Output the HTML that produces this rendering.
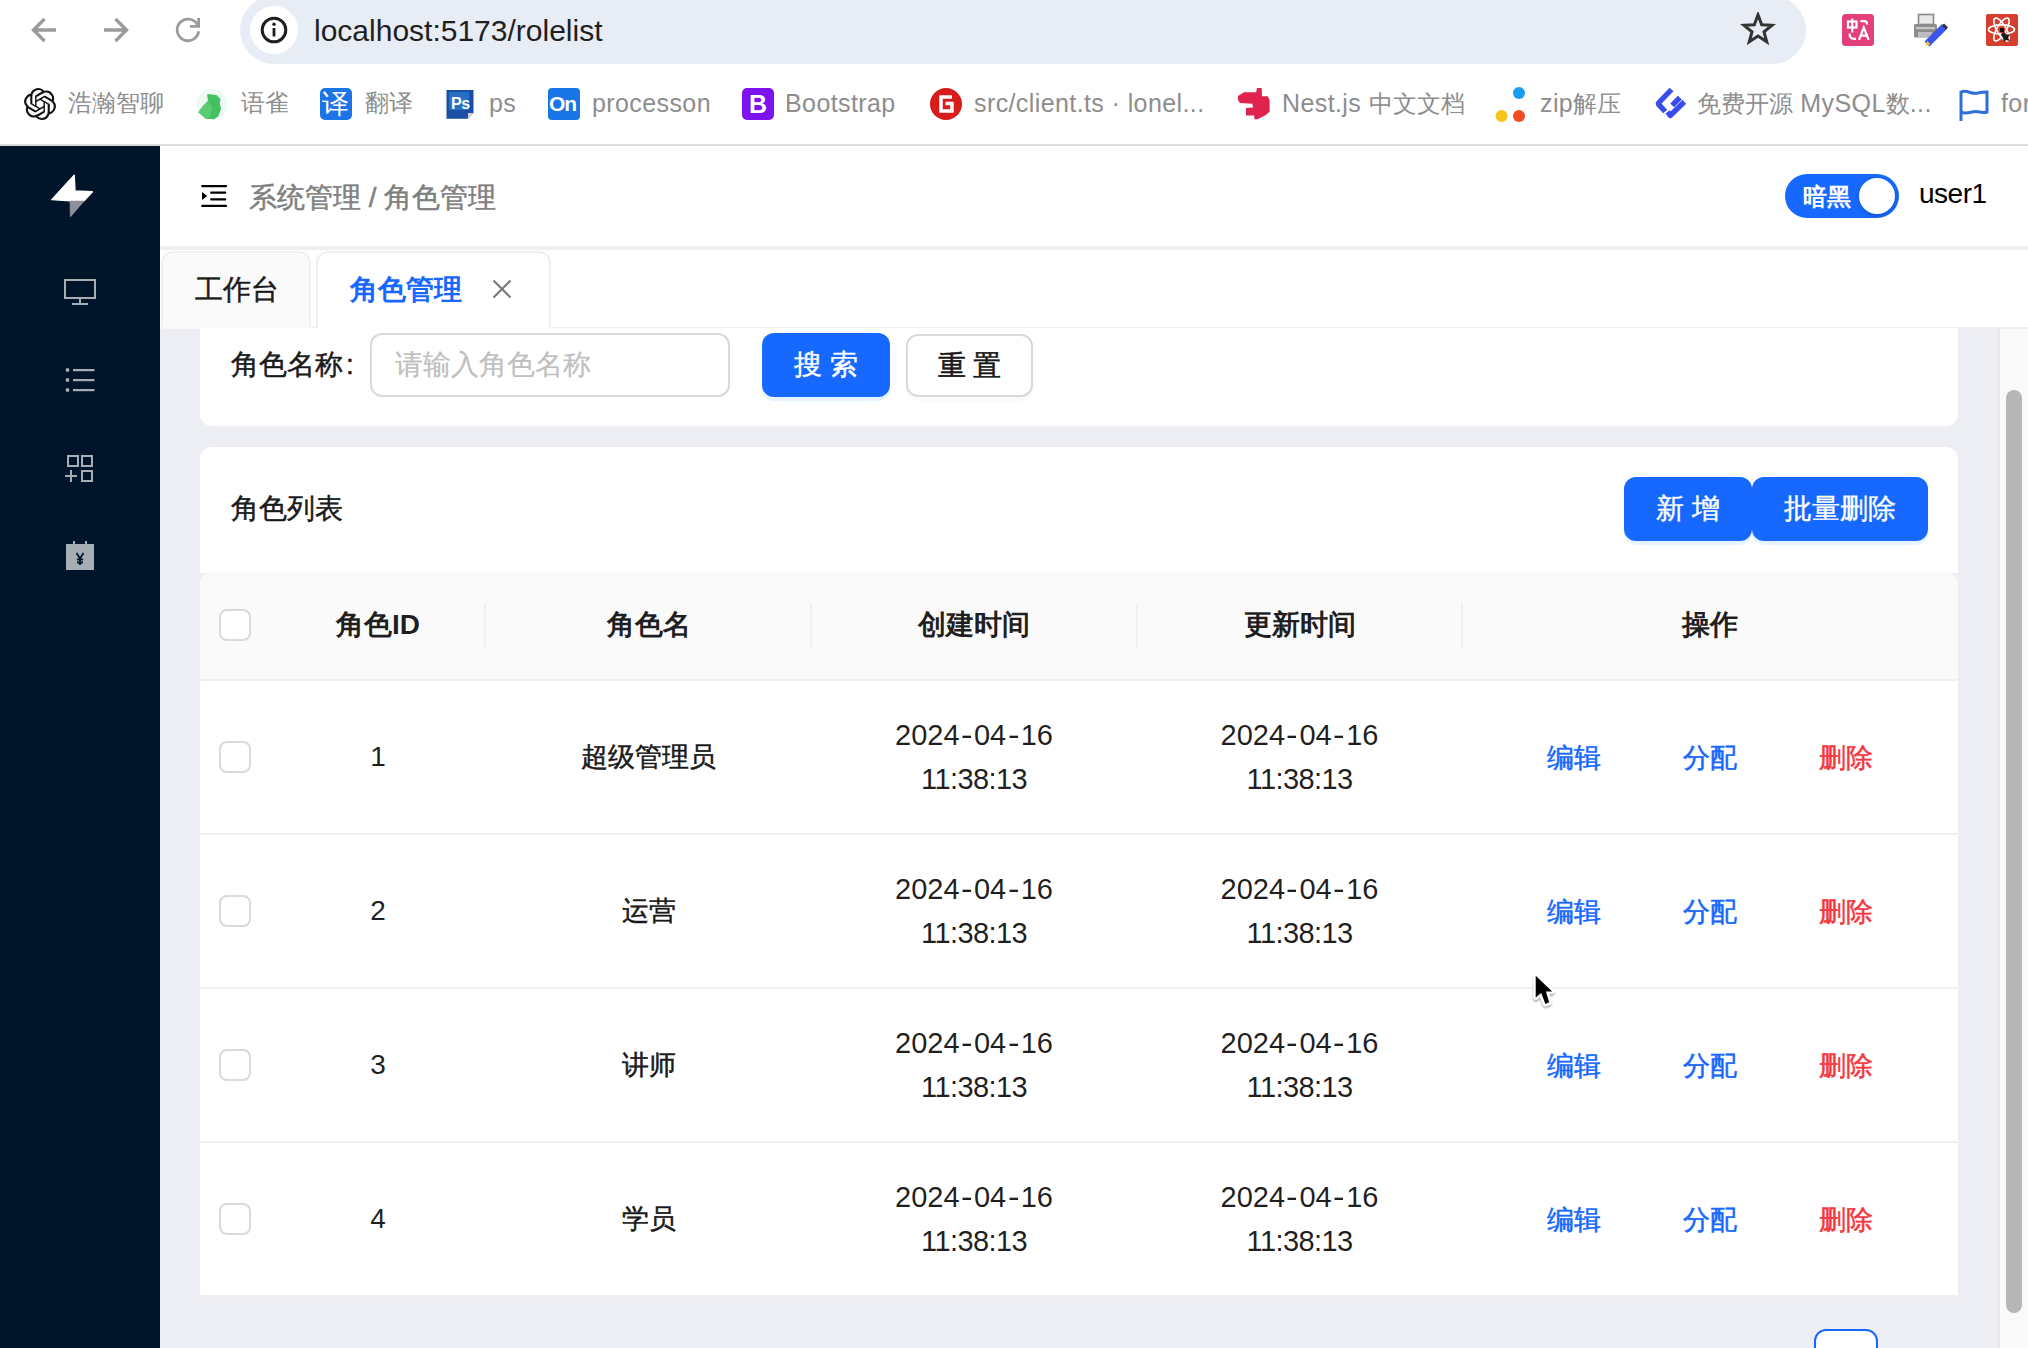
<!DOCTYPE html>
<html><head><meta charset="utf-8">
<style>
*{margin:0;padding:0;box-sizing:border-box}
html,body{width:2028px;height:1348px;overflow:hidden;background:#fff;font-family:"Liberation Sans",sans-serif;color:rgba(0,0,0,0.88)}
.a{position:absolute}
.t{position:absolute;white-space:nowrap;line-height:1}
/* chrome */
#pill{left:240px;top:-4px;width:1566px;height:68px;border-radius:34px;background:#e8ecf4}
#info{left:250px;top:6px;width:48px;height:48px;border-radius:24px;background:#fff}
#url{left:314px;top:16px;font-size:30px;color:#1f1f1f}
.bm{position:absolute;top:85px;height:36px;font-size:25px;letter-spacing:0.4px;color:#8d8d8d;white-space:nowrap;line-height:36px}
.bm .c,.bm.c{font-size:23.5px;letter-spacing:0}
#topline{left:0;top:144px;width:2028px;height:2px;background:#dcdcdc}
/* sider */
#sider{left:0;top:146px;width:160px;height:1202px;background:#001529}
/* header */
#hdr{left:160px;top:146px;width:1868px;height:100px;background:#fff}
#hband{left:160px;top:246px;width:1868px;height:4px;background:#efefef}
#tabs{left:160px;top:250px;width:1868px;height:78px;background:#fff}
#content{left:160px;top:328px;width:1838px;height:1020px;background:#eceef3}
#sb{left:1998px;top:328px;width:30px;height:1020px;background:#f9f9f9;border-left:2px solid #e6e6e6}
#thumb{left:2006px;top:390px;width:16px;height:923px;border-radius:8px;background:#b6b6b6}
.card{position:absolute;background:#fff}
.btnp{position:absolute;background:#1668ff;color:#fff;border-radius:12px;font-size:28px;text-align:center;box-shadow:0 4px 0 rgba(5,145,255,0.1)}
.chk{position:absolute;width:32px;height:32px;border:2px solid #d9d9d9;border-radius:8px;background:#fff}
.th{position:absolute;font-size:28px;font-weight:bold;text-align:center;line-height:1}
.td{position:absolute;font-size:28px;text-align:center;line-height:44px}
.act{position:absolute;font-size:27px;line-height:1;white-space:nowrap}
.dt{font-size:29px}.hy{display:inline-block;margin:0 2.4px;transform:scaleX(1.2)}.d2{letter-spacing:-0.6px}
.cj{-webkit-text-stroke:0.5px currentColor}
.td.cj{font-size:27px}
.row{position:absolute;left:200px;width:1758px;background:#fff;border-bottom:2px solid #f0f0f0}
</style></head><body>
<!-- browser chrome -->
<div class="a" id="pill"></div>
<div class="a" id="info"></div>
<div class="t" id="url">localhost:5173/rolelist</div>
<div class="a" id="topline"></div>
<!-- nav icons -->
<svg class="a" style="left:28px;top:14px" width="32" height="32" viewBox="0 0 32 32"><path d="M28 16H6M16.5 5L5.5 16L16.5 27" fill="none" stroke="#9b9b9b" stroke-width="3.4" stroke-linejoin="miter"/></svg>
<svg class="a" style="left:100px;top:14px" width="32" height="32" viewBox="0 0 32 32"><path d="M4 16H26M15.5 5L26.5 16L15.5 27" fill="none" stroke="#9b9b9b" stroke-width="3.4"/></svg>
<svg class="a" style="left:172px;top:14px" width="32" height="32" viewBox="0 0 32 32"><path d="M26.7 17.3A10.8 10.8 0 1 1 25.4 10.6" fill="none" stroke="#9b9b9b" stroke-width="2.8"/><path d="M25.2 4H28V13.8H18V11H25.2Z" fill="#9b9b9b"/></svg>
<svg class="a" style="left:258px;top:14px" width="32" height="32" viewBox="0 0 32 32"><circle cx="16" cy="16" r="11.8" fill="none" stroke="#1f1f1f" stroke-width="3"/><rect x="14.6" y="14" width="2.8" height="8.5" fill="#1f1f1f"/><circle cx="16" cy="10.2" r="1.7" fill="#1f1f1f"/></svg>
<svg class="a" style="left:1740px;top:12px" width="36" height="36" viewBox="0 0 36 36"><path d="M18.00 2.90L21.70 12.70L32.17 13.20L23.99 19.75L26.76 29.85L18.00 24.10L9.24 29.85L12.01 19.75L3.83 13.20L14.30 12.70Z" fill="none" stroke="#333" stroke-width="3" stroke-linejoin="miter"/></svg>
<svg class="a" style="left:1840px;top:12px" width="36" height="36" viewBox="1840 12 36 36"><rect x="1842" y="14" width="32" height="32" rx="3.5" fill="#e33f7c"/><g fill="none" stroke="#fff" stroke-width="2.2"><rect x="1848" y="21.5" width="8.5" height="6"/><path d="M1852.3 18.5V32.5"/><path d="M1860.5 21.2H1864.5Q1867 21.2 1867 24.5"/><path d="M1849.5 33.5Q1849.5 38.8 1854 38.8H1856"/><path d="M1859 39.8L1863.8 27.6L1868.6 39.8M1860.6 35.6H1867"/></g></svg>


<svg class="a" style="left:1910px;top:10px" width="40" height="40" viewBox="1910 10 40 40"><rect x="1918.5" y="14.5" width="15" height="10" fill="#e9e9e9" stroke="#8a8a8a" stroke-width="1.6"/><rect x="1914" y="24" width="23" height="13.5" rx="1.5" fill="#8c8c8c"/><rect x="1916" y="27" width="19" height="2.2" fill="#c9c9c9"/><rect x="1918" y="32" width="14" height="5" fill="#bdbdbd"/><path d="M1927 44L1944.5 26.5" stroke="#3a55ea" stroke-width="7"/><path d="M1943 24.5L1947 28.5" stroke="#333" stroke-width="3"/><path d="M1925.5 45.8L1927.2 40.8L1930.5 44.2Z" fill="#f2c020"/></svg>
<div class="a" style="left:1986px;top:14px;width:32px;height:32px;border-radius:2px;background:#d63f2e"></div>
<svg class="a" style="left:1986px;top:14px" width="32" height="32" viewBox="0 0 32 32"><g fill="none" stroke="#fff" stroke-width="1.6"><ellipse cx="15.5" cy="15.5" rx="13" ry="4.6"/><ellipse cx="15.5" cy="15.5" rx="13" ry="4.6" transform="rotate(60 15.5 15.5)"/><ellipse cx="15.5" cy="15.5" rx="13" ry="4.6" transform="rotate(120 15.5 15.5)"/></g><rect x="14" y="14" width="4" height="4" fill="#111"/><path d="M15 20L18 18L21 21L24 20L22 24L24 27L20 26L18 28L17 24Z" fill="#1a1a1a"/></svg>

<!-- bookmarks -->
<svg class="a" style="left:24px;top:88px" width="32" height="32" viewBox="0 0 24 24"><path fill="#111" d="M22.2819 9.8211a5.9847 5.9847 0 0 0-.5157-4.9108 6.0462 6.0462 0 0 0-6.5098-2.9A6.0651 6.0651 0 0 0 4.9807 4.1818a5.9847 5.9847 0 0 0-3.9977 2.9 6.0462 6.0462 0 0 0 .7427 7.0966 5.98 5.98 0 0 0 .511 4.9107 6.051 6.051 0 0 0 6.5146 2.9001A5.9847 5.9847 0 0 0 13.2599 24a6.0557 6.0557 0 0 0 5.7718-4.2058 5.9894 5.9894 0 0 0 3.9977-2.9001 6.0557 6.0557 0 0 0-.7475-7.0729zm-9.022 12.6081a4.4755 4.4755 0 0 1-2.8764-1.0408l.1419-.0804 4.7783-2.7582a.7948.7948 0 0 0 .3927-.6813v-6.7369l2.02 1.1686a.071.071 0 0 1 .038.052v5.5826a4.504 4.504 0 0 1-4.4945 4.4944zm-9.6607-4.1254a4.4708 4.4708 0 0 1-.5346-3.0137l.142.0852 4.783 2.7582a.7712.7712 0 0 0 .7806 0l5.8428-3.3685v2.3324a.0804.0804 0 0 1-.0332.0615L9.74 19.9502a4.4992 4.4992 0 0 1-6.1408-1.6464zM2.3408 7.8956a4.485 4.485 0 0 1 2.3655-1.9728V11.6a.7664.7664 0 0 0 .3879.6765l5.8144 3.3543-2.0201 1.1685a.0757.0757 0 0 1-.071 0l-4.8303-2.7865A4.504 4.504 0 0 1 2.3408 7.872zm16.5963 3.8558L13.1038 8.364 15.1192 7.2a.0757.0757 0 0 1 .071 0l4.8303 2.7913a4.4944 4.4944 0 0 1-.6765 8.1042v-5.6772a.79.79 0 0 0-.407-.667zm2.0107-3.0231l-.142-.0852-4.7735-2.7818a.7759.7759 0 0 0-.7854 0L9.409 9.2297V6.8974a.0662.0662 0 0 1 .0284-.0615l4.8303-2.7866a4.4992 4.4992 0 0 1 6.6802 4.66zM8.3065 12.863l-2.02-1.1638a.0804.0804 0 0 1-.038-.0567V6.0742a4.4992 4.4992 0 0 1 7.3757-3.4537l-.142.0805L8.704 5.459a.7948.7948 0 0 0-.3927.6813zm1.0976-2.3654l2.602-1.4998 2.6069 1.4998v2.9994l-2.5974 1.4997-2.6067-1.4997Z"/></svg>
<div class="bm c" style="left:68px">浩瀚智聊</div>
<svg class="a" style="left:194px;top:86px" width="36" height="36" viewBox="194 86 36 36"><circle cx="212.3" cy="104.3" r="15.5" fill="#eef9f1"/><path d="M207.2 94.1L216.5 95L220.6 99.2L219.7 102.4L221 109L218.5 116L214.2 119.3L206 118.7L198.3 112.3L203 106L207.9 101.1Z" fill="#42c062"/><path d="M198.3 112.3L203 106L207.9 101.1L212 108L210 117L206 118.7Z" fill="#5ccc72"/></svg>
<div class="bm c" style="left:241px">语雀</div>
<div class="a" style="left:320px;top:88px;width:32px;height:32px;border-radius:5px;background:#1d73e8"></div>
<div class="t" style="left:322px;top:91px;font-size:27px;color:#fff">译</div>
<div class="bm c" style="left:365px">翻译</div>
<svg class="a" style="left:444px;top:88px" width="34" height="34" viewBox="444 88 34 34"><path d="M446.5 90H473.5V113L468 118.7H446.5Z" fill="#1b4ea6"/><rect x="449" y="92" width="20" height="18" fill="#2a7fd2" opacity="0.7"/><path d="M468 118.7L473.5 113H468Z" fill="#d0d0d0"/></svg>
<div class="t" style="left:451px;top:96px;font-size:16px;color:#fff;font-weight:bold;letter-spacing:-0.5px">Ps</div>
<div class="bm" style="left:489px">ps</div>
<div class="a" style="left:548px;top:88px;width:32px;height:32px;border-radius:4px;background:#1775e5"></div>
<div class="t" style="left:549px;top:93px;font-size:21px;color:#fff;font-weight:bold;letter-spacing:-1px">On</div>
<div class="bm" style="left:592px">processon</div>
<div class="a" style="left:742px;top:88px;width:32px;height:32px;border-radius:5px;background:#7b12ef"></div>
<div class="t" style="left:749px;top:92px;font-size:25px;color:#fff;font-weight:bold">B</div>
<div class="bm" style="left:785px">Bootstrap</div>
<svg class="a" style="left:930px;top:88px" width="32" height="32" viewBox="0 0 32 32"><circle cx="16" cy="16" r="16" fill="#d81c1c"/><path d="M22 9H11V23H22V15.5H15.5" fill="none" stroke="#fff" stroke-width="3.5"/></svg>
<div class="bm" style="left:974px">src/client.ts · lonel...</div>
<svg class="a" style="left:1234px;top:84px" width="40" height="40" viewBox="1234 84 40 40"><path d="M1238 96L1244 92.2L1256.2 92.2L1256.9 88L1261.7 88L1262 96.3L1267.7 96.3L1269.6 99.9L1269.6 111.7L1265.5 115.2L1257.5 119.3L1254.3 119.3L1254.3 115.5L1246 115.5L1246 108.1L1253 107.5L1252.4 103.7L1240 103L1238 99.9Z" fill="#e0234e"/></svg>
<div class="bm" style="left:1282px">Nest.js <span class="c">中文文档</span></div>
<svg class="a" style="left:1494px;top:86px" width="36" height="38" viewBox="0 0 36 38"><circle cx="25" cy="7" r="6" fill="#1a9cf0"/><circle cx="7.5" cy="30" r="6" fill="#f5c518"/><circle cx="25" cy="30" r="6" fill="#f04b23"/></svg>
<div class="bm" style="left:1540px">zip<span class="c">解压</span></div>
<svg class="a" style="left:1650px;top:84px" width="40" height="40" viewBox="1650 84 40 40"><g fill="none" stroke="#3b4cee" stroke-width="5.4" stroke-linejoin="round"><path d="M1671.5 89.5L1659 102.5Q1657.8 103.5 1659 104.8L1665.2 111.5"/><path d="M1679.8 97.6L1672.2 105.4"/><path d="M1667.6 111.8L1670.3 115.5L1684.3 101.8"/></g></svg>
<div class="bm" style="left:1697px"><span class="c">免费开源</span> MySQL<span class="c">数</span>...</div>
<svg class="a" style="left:1958px;top:88px" width="32" height="34" viewBox="0 0 32 34"><path d="M3 3V33" stroke="#2f6fdc" stroke-width="3"/><path d="M3 4C9 1 13 7 20 5C24 4 27 4 29 4V24C24 26 20 22 14 24C10 25 6 26 3 24" fill="none" stroke="#2f6fdc" stroke-width="3"/></svg>
<div class="bm" style="left:2001px">for</div>


<div class="a" id="sider"></div>
<div class="a" id="hdr"></div>
<div class="a" id="hband"></div>
<div class="a" id="tabs"></div>
<div class="a" id="content"></div>
<div class="a" id="sb"></div>
<div class="a" id="thumb"></div>

<!-- sider icons -->
<svg class="a" style="left:48px;top:170px" width="50" height="50" viewBox="48 170 50 50"><path d="M74.2 175.2L75 191L92.4 191.8L84 200.8L70 200.8L51.8 199.6Z" fill="#fff" stroke="#fff" stroke-width="1.4" stroke-linejoin="round"/><path d="M70 201.2L84 201.2L70.4 216.8Z" fill="#8e9099" stroke="#8e9099" stroke-width="0.8" stroke-linejoin="round"/></svg>
<svg class="a" style="left:60px;top:272px" width="40" height="40" viewBox="60 272 40 40"><rect x="65" y="280" width="30" height="18" fill="none" stroke="#a6adb4" stroke-width="2"/><path d="M80 298V303M72 304H88" stroke="#a6adb4" stroke-width="2"/></svg>
<svg class="a" style="left:60px;top:360px" width="40" height="40" viewBox="60 360 40 40"><g fill="#a6adb4"><circle cx="67.5" cy="370" r="1.9"/><circle cx="67.5" cy="380" r="1.9"/><circle cx="67.5" cy="390" r="1.9"/><rect x="73" y="369" width="21.5" height="2.2"/><rect x="73" y="379" width="21.5" height="2.2"/><rect x="73" y="389" width="21.5" height="2.2"/></g></svg>
<svg class="a" style="left:60px;top:448px" width="40" height="40" viewBox="60 448 40 40"><g fill="none" stroke="#a6adb4" stroke-width="2"><rect x="68" y="456" width="10" height="10"/><rect x="82" y="456" width="10" height="10"/><rect x="82" y="471" width="10" height="10"/><path d="M65 476H77M71 470V482"/></g></svg>
<svg class="a" style="left:60px;top:536px" width="40" height="40" viewBox="60 536 40 40"><path d="M66 544H94V570H66Z" fill="#a6adb4"/><path d="M74 541V546M86 541V546" stroke="#a6adb4" stroke-width="2"/><path d="M76.5 553L80 558.5L83.5 553M80 558.5V565M77 559.5H83M77 562.5H83" fill="none" stroke="#001529" stroke-width="1.8"/></svg>

<!-- header icon -->
<svg class="a" style="left:198px;top:182px" width="32" height="28" viewBox="198 182 32 28"><g fill="#000"><rect x="201.2" y="185" width="25.8" height="2.2" rx="1"/><rect x="210.2" y="191.5" width="16" height="2.3" rx="0.8"/><rect x="210.2" y="198.2" width="16" height="2.3" rx="0.8"/><rect x="201.2" y="204.7" width="25.8" height="2.2" rx="1"/><path d="M202 192L207.2 196L202 200Z"/></g></svg>

<!-- toggle -->
<div class="a" style="left:1785px;top:174px;width:114px;height:44px;border-radius:22px;background:#1668ff"></div>
<div class="a" style="left:1859px;top:178px;width:36px;height:36px;border-radius:18px;background:#fff;box-shadow:0 2px 4px rgba(0,35,11,0.2)"></div>
<div class="t" style="left:1803px;top:185.5px;font-size:23.5px;color:#fff;font-weight:bold">暗黑</div>

<!-- tabs -->
<div class="a" style="left:160px;top:327px;width:1868px;height:2px;background:#f0f0f0"></div>
<div class="a" style="left:161px;top:251px;width:150px;height:78px;background:#fafafa;border:2px solid #f0f0f0;border-bottom:none;border-radius:12px 12px 0 0"></div>
<div class="a" style="left:316px;top:251px;width:235px;height:78px;background:#fff;border:2px solid #f0f0f0;border-bottom:none;border-radius:12px 12px 0 0"></div>
<div class="t cj" style="left:195px;top:276px;font-size:28px">工作台</div>
<div class="t" style="left:350px;top:276px;font-size:28px;color:#1668ff;font-weight:bold">角色管理</div>
<svg class="a" style="left:490px;top:277px" width="24" height="24" viewBox="0 0 24 24"><path d="M3.5 3.5L20.5 20.5M20.5 3.5L3.5 20.5" stroke="#7a7a7a" stroke-width="2.2"/></svg>
<div class="t cj" style="left:249px;top:183.5px;font-size:28px;color:#7f7f7f">系统管理 / 角色管理</div>
<div class="t" style="left:1919px;top:180px;font-size:28px;color:#000;letter-spacing:-0.5px">user1</div>

<!-- search card -->
<div class="card" style="left:200px;top:328px;width:1758px;height:98px;border-radius:0 0 12px 12px"></div>
<div class="t cj" style="left:231px;top:351px;font-size:28px">角色名称<span style="margin-left:3px">:</span></div>
<div class="a" style="left:370px;top:333px;width:360px;height:64px;border:2px solid #d9d9d9;border-radius:12px"></div>
<div class="t" style="left:395px;top:351px;font-size:28px;color:#bfbfbf;-webkit-text-stroke:0.2px #bfbfbf">请输入角色名称</div>
<div class="btnp" style="left:762px;top:333px;width:128px;height:64px;line-height:64px;-webkit-text-stroke:0.4px #fff">搜 索</div>
<div class="a" style="left:906px;top:334px;width:127px;height:63px;border:2px solid #d9d9d9;border-radius:12px;font-size:28px;text-align:center;line-height:59px;box-shadow:0 4px 0 rgba(0,0,0,0.02);-webkit-text-stroke:0.5px #000">重 置</div>

<!-- table card -->
<div class="card" style="left:200px;top:447px;width:1758px;height:126px;border-radius:12px 12px 0 0"></div>
<div class="t cj" style="left:231px;top:495px;font-size:28px">角色列表</div>
<div class="btnp" style="left:1624px;top:477px;width:128px;height:64px;line-height:64px;-webkit-text-stroke:0.4px #fff">新 增</div>
<div class="btnp" style="left:1752px;top:477px;width:176px;height:64px;line-height:64px;-webkit-text-stroke:0.4px #fff">批量删除</div>

<!-- table -->
<div class="a" style="left:200px;top:572px;width:1758px;height:109px;background:#fafafa;border-radius:12px 12px 0 0;border-bottom:2px solid #f0f0f0"></div>
<div class="chk" style="left:219px;top:609px"></div>
<div class="th" style="left:270px;width:216px;top:611px">角色ID</div>
<div class="th" style="left:486px;width:325px;top:611px">角色名</div>
<div class="th" style="left:811px;width:326px;top:611px">创建时间</div>
<div class="th" style="left:1137px;width:325px;top:611px">更新时间</div>
<div class="th" style="left:1462px;width:495px;top:611px">操作</div>
<div class="a" style="left:484px;top:603px;width:2px;height:44px;background:#f0f0f0"></div>
<div class="a" style="left:810px;top:603px;width:2px;height:44px;background:#f0f0f0"></div>
<div class="a" style="left:1136px;top:603px;width:2px;height:44px;background:#f0f0f0"></div>
<div class="a" style="left:1461px;top:603px;width:2px;height:44px;background:#f0f0f0"></div>
<div class="row" style="top:681px;height:154px"></div>
<div class="chk" style="left:219px;top:741px"></div>
<div class="td" style="left:270px;width:216px;top:735px">1</div>
<div class="td cj" style="left:486px;width:325px;top:735px">超级管理员</div>
<div class="td dt" style="left:811px;width:326px;top:713px"><span class="d1">2024<span class="hy">-</span>04<span class="hy">-</span>16</span><br><span class="d2">11:38:13</span></div>
<div class="td dt" style="left:1137px;width:325px;top:713px"><span class="d1">2024<span class="hy">-</span>04<span class="hy">-</span>16</span><br><span class="d2">11:38:13</span></div>
<div class="act cj" style="left:1546.5px;top:744.5px;color:#1668ff">编辑</div>
<div class="act cj" style="left:1682.5px;top:744.5px;color:#1668ff">分配</div>
<div class="act cj" style="left:1818.5px;top:744.5px;color:#f5363c">删除</div>
<div class="row" style="top:835px;height:154px"></div>
<div class="chk" style="left:219px;top:895px"></div>
<div class="td" style="left:270px;width:216px;top:889px">2</div>
<div class="td cj" style="left:486px;width:325px;top:889px">运营</div>
<div class="td dt" style="left:811px;width:326px;top:867px"><span class="d1">2024<span class="hy">-</span>04<span class="hy">-</span>16</span><br><span class="d2">11:38:13</span></div>
<div class="td dt" style="left:1137px;width:325px;top:867px"><span class="d1">2024<span class="hy">-</span>04<span class="hy">-</span>16</span><br><span class="d2">11:38:13</span></div>
<div class="act cj" style="left:1546.5px;top:898.5px;color:#1668ff">编辑</div>
<div class="act cj" style="left:1682.5px;top:898.5px;color:#1668ff">分配</div>
<div class="act cj" style="left:1818.5px;top:898.5px;color:#f5363c">删除</div>
<div class="row" style="top:989px;height:154px"></div>
<div class="chk" style="left:219px;top:1049px"></div>
<div class="td" style="left:270px;width:216px;top:1043px">3</div>
<div class="td cj" style="left:486px;width:325px;top:1043px">讲师</div>
<div class="td dt" style="left:811px;width:326px;top:1021px"><span class="d1">2024<span class="hy">-</span>04<span class="hy">-</span>16</span><br><span class="d2">11:38:13</span></div>
<div class="td dt" style="left:1137px;width:325px;top:1021px"><span class="d1">2024<span class="hy">-</span>04<span class="hy">-</span>16</span><br><span class="d2">11:38:13</span></div>
<div class="act cj" style="left:1546.5px;top:1052.5px;color:#1668ff">编辑</div>
<div class="act cj" style="left:1682.5px;top:1052.5px;color:#1668ff">分配</div>
<div class="act cj" style="left:1818.5px;top:1052.5px;color:#f5363c">删除</div>
<div class="row" style="top:1143px;height:154px"></div>
<div class="chk" style="left:219px;top:1203px"></div>
<div class="td" style="left:270px;width:216px;top:1197px">4</div>
<div class="td cj" style="left:486px;width:325px;top:1197px">学员</div>
<div class="td dt" style="left:811px;width:326px;top:1175px"><span class="d1">2024<span class="hy">-</span>04<span class="hy">-</span>16</span><br><span class="d2">11:38:13</span></div>
<div class="td dt" style="left:1137px;width:325px;top:1175px"><span class="d1">2024<span class="hy">-</span>04<span class="hy">-</span>16</span><br><span class="d2">11:38:13</span></div>
<div class="act cj" style="left:1546.5px;top:1206.5px;color:#1668ff">编辑</div>
<div class="act cj" style="left:1682.5px;top:1206.5px;color:#1668ff">分配</div>
<div class="act cj" style="left:1818.5px;top:1206.5px;color:#f5363c">删除</div>

<!-- pagination partial -->
<div class="a" style="left:1814px;top:1329px;width:64px;height:40px;border:2px solid #1668ff;border-radius:12px;background:#fff"></div>
<!-- cursor -->
<svg class="a" style="left:1525px;top:966px" width="40" height="50" viewBox="1525 966 40 50"><defs><filter id="sh" x="-30%" y="-30%" width="160%" height="160%"><feGaussianBlur in="SourceAlpha" stdDeviation="1.2"/><feOffset dy="1.5"/><feComponentTransfer><feFuncA type="linear" slope="0.35"/></feComponentTransfer><feMerge><feMergeNode/><feMergeNode in="SourceGraphic"/></feMerge></filter></defs><g filter="url(#sh)"><path d="M1535.7 975.7L1552.2 991.5L1545.9 991.6L1549.2 1002.3L1545.4 1003.9L1541.2 993.1L1535.7 997.4Z" fill="#fff" stroke="#fff" stroke-width="4.6" stroke-linejoin="round"/></g><path d="M1535.7 975.7L1552.2 991.5L1545.9 991.6L1549.2 1002.3L1545.4 1003.9L1541.2 993.1L1535.7 997.4Z" fill="#000"/></svg>
</body></html>
